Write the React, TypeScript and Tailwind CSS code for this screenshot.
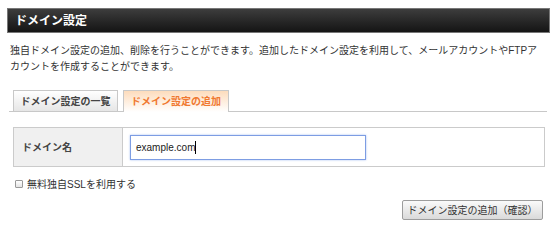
import React from 'react';

const font = { fontFamily: '"Liberation Sans", "Noto Sans CJK JP", sans-serif' };

export default function App() {
  return (
    <div className="w-[558px] h-[225px] bg-white text-[#333] overflow-hidden" style={font}>
      {/* 見出し */}
      <div className="mt-[8px] ml-[7px] mr-[8px] h-[25px] border border-[#777] bg-gradient-to-b from-[#3d3d3d] to-[#151515] flex items-center pl-[7px]">
        <h1 className="text-white text-[12px] font-bold leading-none">ドメイン設定</h1>
      </div>

      {/* 説明文 */}
      <p className="mt-[10px] px-[10px] text-[10px] leading-[16px] text-[#333]">
        独自ドメイン設定の追加、削除を行うことができます。追加したドメイン設定を利用して、メールアカウントやFTPア
        <br />
        カウントを作成することができます。
      </p>

      {/* タブ */}
      <div className="mt-[16px] ml-[9px] mr-[11px] flex items-end gap-[5px] pl-[4px] border-b border-[#c8c8c8] h-[21px]">
        <button className="w-[105px] h-[21px] border border-[#c8c8c8] border-b-0 bg-gradient-to-b from-[#ffffff] to-[#e6e6e6] text-[10px] font-bold text-[#444] flex items-center justify-center">
          ドメイン設定の一覧
        </button>
        <button className="w-[106px] h-[22px] -mb-px border border-[#c8c8c8] border-b-0 bg-gradient-to-b from-[#fddcbc] to-[#ffffff] text-[10px] font-bold text-[#f07830] flex items-center justify-center">
          ドメイン設定の追加
        </button>
      </div>

      {/* フォーム */}
      <div className="mt-[15px] ml-[13px] w-[532px] h-[40px] border border-[#cbcbcb] flex">
        <div className="w-[109px] bg-[#f0f0f0] border-r border-[#cbcbcb] flex items-center pl-[8px] text-[10px] font-bold text-[#444]">
          ドメイン名
        </div>
        <div className="flex items-center pl-[7px]">
          <div className="w-[236px] h-[25px] border border-[#7d9de3] shadow-[0_0_2px_#a9c0f2] bg-white flex items-center pl-[5px] text-[10px] text-[#222]">
            <span>example.com</span>
            <span className="w-px h-[13px] bg-black" />
          </div>
        </div>
      </div>

      {/* SSL */}
      <label className="mt-[12px] ml-[15px] flex items-center gap-[4px] text-[10px] text-[#333] h-[10px]">
        <span className="w-[8px] h-[8px] border border-[#999] bg-gradient-to-b from-[#ffffff] to-[#e4e4e4] rounded-[1px]" />
        無料独自SSLを利用する
      </label>

      {/* ボタン */}
      <div className="flex justify-end mt-[11px] pr-[15px]">
        <button className="w-[141px] h-[20px] border border-[#9d9d9d] rounded-[2px] bg-gradient-to-b from-[#fafafa] to-[#dadada] text-[10px] text-[#333] flex items-center justify-center">
          ドメイン設定の追加（確認）
        </button>
      </div>
    </div>
  );
}
